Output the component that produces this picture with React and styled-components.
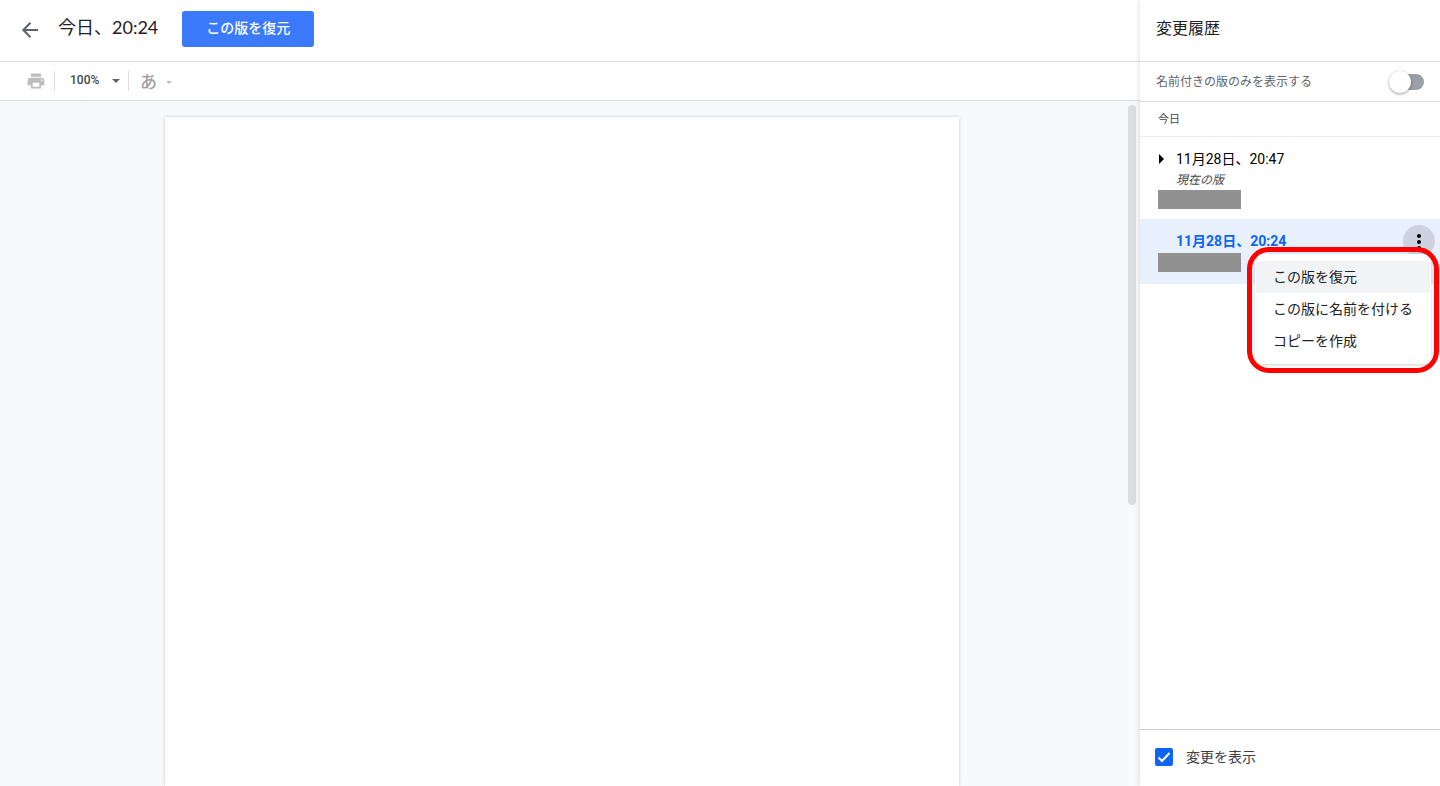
import React from "react";
import styled, { createGlobalStyle } from "styled-components";

const GlobalStyle = createGlobalStyle`
  *, *::before, *::after { box-sizing: border-box; }
  body {
    margin: 0;
    background: #fff;
    color: #202124;
    font-family: Roboto, "Noto Sans CJK JP", sans-serif;
    font-size: 14px;
  }
  button, input, select { font: inherit; color: inherit; margin: 0; }
  h1, h2, h3, p, ul { margin: 0; padding: 0; font-weight: 400; list-style: none; }
`;

const Layout = styled.div`
  display: grid;
  grid-template-columns: minmax(0, 1fr) 300px;
  height: 100vh;
  overflow: hidden;
`;

const Main = styled.main`
  display: flex;
  flex-direction: column;
  min-height: 0;
`;

const Header = styled.header`
  display: flex;
  align-items: center;
  height: 62px;
  padding: 0 20px 4px;
  border-bottom: 1px solid #dadce0;
`;

const PlainButton = styled.button`
  display: flex;
  align-items: center;
  justify-content: center;
  padding: 0;
  border: 0;
  background: none;
  cursor: pointer;
`;

const BackButton = styled(PlainButton)`
  width: 20px;
  height: 24px;
  padding-top: 2px;
  margin-right: 18px;
`;

const Title = styled.h1`
  margin-right: 24px;
  padding-bottom: 4px;
  font-family: Lato, "Noto Sans CJK JP", sans-serif;
  font-size: 18px;
  line-height: 24px;
  white-space: nowrap;
`;

const RestoreButton = styled(PlainButton)`
  height: 36px;
  padding: 0 24px 4px;
  border-radius: 3px;
  background: #3b7afd;
  color: #fff;
  font-weight: 500;
  white-space: nowrap;
`;

const Toolbar = styled.div`
  display: flex;
  align-items: center;
  height: 39px;
  padding-left: 26px;
  border-bottom: 1px solid #dadce0;
`;

const PrintButton = styled(PlainButton)`
  width: 20px;
  height: 20px;
`;

const Separator = styled.span`
  width: 1px;
  height: 20px;
  margin-left: 8px;
  background: #dadce0;
`;

const ZoomField = styled.div`
  display: grid;
  align-items: center;
  width: 64px;
  margin-left: 1px;
  > * { grid-area: 1 / 1; }
  > svg { justify-self: end; pointer-events: none; }
`;

const ZoomSelect = styled.select`
  appearance: none;
  width: 100%;
  height: 20px;
  padding: 0 0 2px 14px;
  border: 0;
  background: none;
  color: #444746;
  font-size: 12px;
  font-weight: 500;
`;

const InputToolsButton = styled(PlainButton)`
  gap: 9px;
  height: 26px;
  padding-top: 2px;
  margin-left: 11px;
  color: #a0a0a0;
  font-size: 17px;
  line-height: 24px;
  font-weight: 500;
`;

const Workspace = styled.div`
  flex: 1;
  display: flex;
  min-height: 0;
  background: #f8f9fb;
`;

const Desk = styled.div`
  flex: 1;
  display: flex;
  justify-content: center;
  padding-top: 16px;
`;

const Paper = styled.article`
  width: 794px;
  background: #fff;
  box-shadow: 0 0 3px rgba(60, 64, 67, 0.25);
`;

const ScrollTrack = styled.div`
  width: 16px;
  padding: 4px;
`;

const ScrollThumb = styled.div`
  height: 400px;
  border-radius: 4px;
  background: #dadce0;
`;

const Sidebar = styled.aside`
  display: flex;
  flex-direction: column;
  position: relative;
  min-height: 0;
  background: #fff;
  box-shadow: 0 0 6px rgba(60, 64, 67, 0.2);
`;

const SidebarTitle = styled.h2`
  height: 62px;
  padding: 17px 16px 0;
  border-bottom: 1px solid #dadce0;
  font-size: 16px;
  line-height: 24px;
`;

const FilterRow = styled.label`
  display: flex;
  align-items: center;
  justify-content: space-between;
  height: 40px;
  padding: 0 16px;
  border-bottom: 1px solid #dadce0;
  color: #5f6368;
  font-size: 12px;
`;

const LabelText = styled.span`
  padding-bottom: 2px;
`;

const Switch = styled.input`
  appearance: none;
  display: flex;
  align-items: center;
  width: 34px;
  height: 16px;
  border-radius: 8px;
  background: #9aa0a6;
  &::before {
    content: "";
    width: 22px;
    height: 22px;
    margin-left: -1px;
    border-radius: 50%;
    background: #fff;
    box-shadow: 0 1px 3px rgba(0, 0, 0, 0.4);
  }
`;

const DayHeading = styled.h3`
  height: 35px;
  padding-left: 18px;
  border-bottom: 1px solid #ececee;
  color: #444746;
  font-size: 11px;
  line-height: 36px;
`;

const Versions = styled.ul`
  flex: 1;
`;

const Version = styled.li`
  position: relative;
  padding: 11px 5px ${(p) => (p.$selected ? 12 : 10)}px 18px;
  background: ${(p) => (p.$selected ? "#e8effd" : "transparent")};
`;

const VersionHead = styled.div`
  display: flex;
  align-items: center;
  height: 22px;
`;

const ExpandButton = styled(PlainButton)`
  width: 18px;
  height: 20px;
  justify-content: flex-start;
`;

const VersionTime = styled.span`
  margin-left: ${(p) => (p.$selected ? 18 : 0)}px;
  color: ${(p) => (p.$selected ? "#0b66f5" : "#000")};
  font-weight: ${(p) => (p.$selected ? 700 : 400)};
  line-height: 20px;
`;

const CurrentNote = styled.p`
  height: 19px;
  padding-left: 18px;
  color: #444746;
  font-size: 12px;
  font-style: italic;
  line-height: 20px;
`;

const EditorBlock = styled.div`
  width: 83px;
  height: 19px;
  margin-top: 1px;
  background: #919191;
`;

const MoreButton = styled(PlainButton)`
  width: 32px;
  height: 32px;
  padding-top: 2px;
  margin-left: auto;
  border-radius: 50%;
  background: #ccd2df;
`;

const Menu = styled.div`
  position: absolute;
  z-index: 1;
  top: 35px;
  right: 9px;
  padding: 7px 1px;
  background: #fff;
  box-shadow: 0 1px 3px rgba(60, 64, 67, 0.25);
`;

const MenuItem = styled(PlainButton)`
  justify-content: flex-start;
  width: 100%;
  height: 32px;
  padding: 0 17px 3px;
  background: ${(p) => (p.$active ? "#f1f3f4" : "none")};
  white-space: nowrap;
`;

const Highlight = styled.div`
  position: absolute;
  z-index: 2;
  top: 28px;
  right: 1px;
  width: 192px;
  height: 126px;
  border: 5px solid #ff0000;
  border-radius: 22px;
  pointer-events: none;
`;

const Footer = styled.label`
  display: flex;
  align-items: center;
  gap: 13px;
  height: 57px;
  padding: 0 15px 2px;
  border-top: 1px solid #c9cbcc;
  color: #3c4043;
`;

const CheckWrap = styled.span`
  display: grid;
  width: 18px;
  height: 18px;
  > * { grid-area: 1 / 1; }
  > svg { pointer-events: none; }
`;

const Checkbox = styled.input`
  appearance: none;
  width: 18px;
  height: 18px;
  border-radius: 2px;
  background: #0b66f5;
`;

const Arrow = ({ color, size = 8 }) => (
  <svg width={size} height={size / 2} viewBox="0 0 8 4" aria-hidden="true">
    <path d="M0 0h8L4 4z" fill={color} />
  </svg>
);

export default function App() {
  return (
    <>
      <GlobalStyle />
      <Layout>
        <Main>
          <Header>
            <BackButton aria-label="戻る">
              <svg width="20" height="20" viewBox="0 0 20 20" fill="none" stroke="#5f6368" strokeWidth="2">
                <path d="M18 10H4M10.5 2.8 3.3 10l7.2 7.2" />
              </svg>
            </BackButton>
            <Title>今日、20:24</Title>
            <RestoreButton>この版を復元</RestoreButton>
          </Header>
          <Toolbar>
            <PrintButton aria-label="印刷">
              <svg width="20" height="20" viewBox="0 0 24 24" fill="#bdbdbd">
                <path d="M19 8H5c-1.66 0-3 1.34-3 3v6h4v4h12v-4h4v-6c0-1.66-1.34-3-3-3zm-3 11H8v-5h8v5zm3-7c-.55 0-1-.45-1-1s.45-1 1-1 1 .45 1 1-.45 1-1 1zm-1-9H6v4h12V3z" />
              </svg>
            </PrintButton>
            <Separator />
            <ZoomField>
              <ZoomSelect aria-label="ズーム" defaultValue="100">
                <option value="100">100%</option>
              </ZoomSelect>
              <Arrow color="#5f6368" />
            </ZoomField>
            <Separator />
            <InputToolsButton aria-label="入力ツール">
              あ
              <Arrow color="#bdbdbd" size={6} />
            </InputToolsButton>
          </Toolbar>
          <Workspace>
            <Desk>
              <Paper />
            </Desk>
            <ScrollTrack>
              <ScrollThumb />
            </ScrollTrack>
          </Workspace>
        </Main>
        <Sidebar>
          <SidebarTitle>変更履歴</SidebarTitle>
          <FilterRow>
            <LabelText>名前付きの版のみを表示する</LabelText>
            <Switch type="checkbox" role="switch" />
          </FilterRow>
          <DayHeading>今日</DayHeading>
          <Versions>
            <Version>
              <VersionHead>
                <ExpandButton aria-label="展開">
                  <svg width="6" height="10" viewBox="0 0 6 10">
                    <path d="M1 0 6 5 1 10z" fill="#000" />
                  </svg>
                </ExpandButton>
                <VersionTime>11月28日、20:47</VersionTime>
              </VersionHead>
              <CurrentNote>現在の版</CurrentNote>
              <EditorBlock />
            </Version>
            <Version $selected>
              <VersionHead>
                <VersionTime $selected>11月28日、20:24</VersionTime>
                <MoreButton aria-label="その他の操作">
                  <svg width="6" height="16" viewBox="0 0 6 16" fill="#000">
                    <circle cx="3" cy="2" r="2" />
                    <circle cx="3" cy="8" r="2" />
                    <circle cx="3" cy="14" r="2" />
                  </svg>
                </MoreButton>
              </VersionHead>
              <EditorBlock />
              <Menu role="menu">
                <MenuItem role="menuitem" $active>この版を復元</MenuItem>
                <MenuItem role="menuitem">この版に名前を付ける</MenuItem>
                <MenuItem role="menuitem">コピーを作成</MenuItem>
              </Menu>
              <Highlight />
            </Version>
          </Versions>
          <Footer>
            <CheckWrap>
              <Checkbox type="checkbox" defaultChecked />
              <svg width="18" height="18" viewBox="0 0 18 18" fill="none" stroke="#fff" strokeWidth="2">
                <path d="m3.5 9.5 3.5 3.5 7.5-8" />
              </svg>
            </CheckWrap>
            <LabelText>変更を表示</LabelText>
          </Footer>
        </Sidebar>
      </Layout>
    </>
  );
}
